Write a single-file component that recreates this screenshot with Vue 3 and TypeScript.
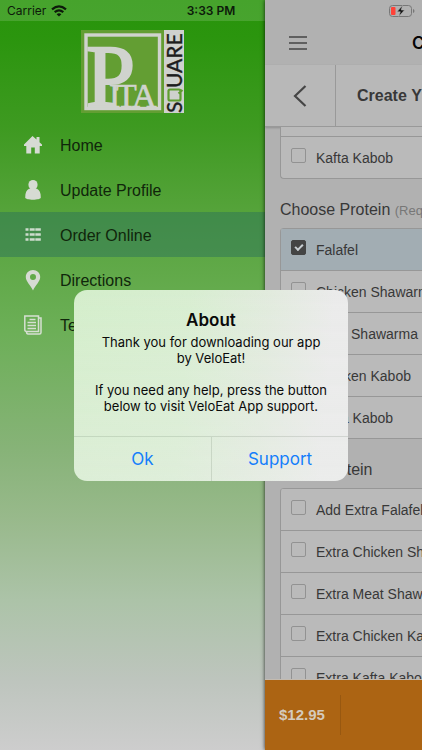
<script setup lang="ts">
import { ref } from 'vue'

interface MenuItem {
  id: string
  label: string
}
interface Option {
  id: string
  label: string
  checked: boolean
}

const menu: MenuItem[] = [
  { id: 'home', label: 'Home' },
  { id: 'profile', label: 'Update Profile' },
  { id: 'order', label: 'Order Online' },
  { id: 'directions', label: 'Directions' },
  { id: 'terms', label: 'Terms' },
]
const active = ref('order')

const firstGroup = ref<Option[]>([{ id: 'kafta', label: 'Kafta Kabob', checked: false }])
const protein = ref<Option[]>([
  { id: 'p-falafel', label: 'Falafel', checked: true },
  { id: 'p-chicken-sh', label: 'Chicken Shawarma', checked: false },
  { id: 'p-meat-sh', label: 'Meat Shawarma', checked: false },
  { id: 'p-chicken-k', label: 'Chicken Kabob', checked: false },
  { id: 'p-kafta-k', label: 'Kafta Kabob', checked: false },
])
const extra = ref<Option[]>([
  { id: 'e-falafel', label: 'Add Extra Falafel', checked: false },
  { id: 'e-chicken-sh', label: 'Extra Chicken Shawarma', checked: false },
  { id: 'e-meat-sh', label: 'Extra Meat Shawarma', checked: false },
  { id: 'e-chicken-k', label: 'Extra Chicken Kabob', checked: false },
  { id: 'e-kafta-k', label: 'Extra Kafta Kabob', checked: false },
])
const alertOpen = ref(true)
</script>

<template>
  <div class="screen">
    <aside class="drawer">
      <div class="drawer-strip"></div>
      <svg class="logo" viewBox="0 0 103 83" role="img" aria-label="Pita Square">
        <rect width="83" height="83" fill="#639e33" />
        <rect x="83" width="20" height="83" fill="#cfd1ce" />
        <rect x="5" y="5" width="73.500" height="73.500" fill="none" stroke="#d0d3ce" stroke-width="3.400" />
        <g class="logo-serif" fill="#d0d3ce" stroke="#d0d3ce">
          <text x="5" y="76" font-size="88" stroke-width="2.400">P</text>
          <text x="28 35 51" y="77" font-size="34" stroke-width="0.6">ITA</text>
        </g>
        <g class="logo-sans" fill="#1d1d1d" stroke="#1d1d1d" stroke-width="0.4" font-size="21" transform="translate(101 83) rotate(-90)">
          <text x="0" y="0">S</text>
          <text x="25" y="0">UARE</text>
        </g>
        <path d="M87.500 69V61Q87.500 59.500 89 59.500H98Q99.500 59.500 99.500 61V69Q99.500 70.500 98 70.500H89Q87.500 70.500 87.500 69ZM97.500 63.500L101.500 60" fill="none" stroke="#5f9d2f" stroke-width="2.200" />
      </svg>
      <nav class="menu">
        <a
          v-for="m in menu"
          :key="m.id"
          href="#"
          class="menu-item"
          :class="{ active: m.id === active }"
          @click.prevent="active = m.id"
        >
          <svg class="menu-icon" viewBox="0 0 20 22" aria-hidden="true">
            <path v-if="m.id === 'home'" d="M9.500 2L13.500 5.600V3H16.500V8.300L19 10.600V12H16.700V19.500H11.800V13.500H8.200V19.500H3.300V12H1V10.600Z" fill="#d6dbd3" />
            <g v-else-if="m.id === 'profile'" fill="#d6dbd3">
              <ellipse cx="10" cy="5.800" rx="4.600" ry="4.900" />
              <path d="M6 9.800H14C16.500 11 17.800 14 17.800 18.500C17.800 21.400 2.200 21.400 2.200 18.500C2.200 14 3.500 11 6 9.800Z" />
            </g>
            <path v-else-if="m.id === 'order'" d="M2.500 5.500h3M6.700 5.500h5M12.300 5.500h5.500M2.500 10.500h3M6.700 10.500h5M12.300 10.500h5.500M2.500 15.500h3M6.700 15.500h5M12.300 15.500h5.500" stroke="#cddccd" stroke-width="2.400" />
            <path v-else-if="m.id === 'directions'" fill-rule="evenodd" d="M10 1C14 1 17.200 4 17.200 8C17.200 12.500 12.500 16 10 21.500C7.500 16 2.800 12.500 2.800 8C2.800 4 6 1 10 1ZM10 5A3 3 0 1 0 10 11A3 3 0 1 0 10 5Z" fill="#d6dbd3" />
            <g v-else fill="none" stroke="#d6dfd2" stroke-width="1.500">
              <path d="M1.800 2H15.500V17.500H3.500Q1.800 17.500 1.800 15.500ZM15.500 4H18V18.500Q18 20 16.500 20H5Q3.500 20 3.500 17.500" />
              <path d="M6.500 5.500h6M4.500 8.500h8.500M4.500 11.500h8.500M4.500 14.500h8.500" />
            </g>
          </svg>
          <span>{{ m.label }}</span>
        </a>
      </nav>
    </aside>

    <main class="panel">
      <header class="topbar">
        <button class="icon-btn" type="button" aria-label="Menu">
          <svg width="20" height="16" viewBox="0 0 20 16"><path d="M1 2H19M1 8H19M1 14H19" stroke="#444" stroke-width="1.600" /></svg>
        </button>
        <h1 class="title">Create</h1>
      </header>
      <div class="subbar">
        <button class="back" type="button" aria-label="Back">
          <svg width="14" height="22" viewBox="0 0 14 22"><path d="M12.500 1L2 11L12.500 21" fill="none" stroke="#454545" stroke-width="2.200" /></svg>
        </button>
        <h2 class="subtitle">Create Your</h2>
      </div>
      <div class="content">
        <ul class="options continued">
          <li class="row-end"></li>
          <li v-for="o in firstGroup" :key="o.id" class="row">
            <label class="option" :for="o.id"><input :id="o.id" v-model="o.checked" type="checkbox" /><span>{{ o.label }}</span></label>
          </li>
        </ul>
        <h3 class="group">Choose Protein <small>(Required)</small></h3>
        <ul class="options">
          <li v-for="o in protein" :key="o.id" class="row" :class="{ selected: o.checked }">
            <label class="option" :for="o.id"><input :id="o.id" v-model="o.checked" type="checkbox" /><span>{{ o.label }}</span></label>
          </li>
        </ul>
        <h3 class="group">Extra Protein</h3>
        <ul class="options">
          <li v-for="o in extra" :key="o.id" class="row" :class="{ selected: o.checked }">
            <label class="option" :for="o.id"><input :id="o.id" v-model="o.checked" type="checkbox" /><span>{{ o.label }}</span></label>
          </li>
        </ul>
      </div>
      <footer class="cart"><strong class="price">$12.95</strong></footer>
    </main>

    <div class="status">
      <span class="carrier">
        Carrier
        <svg width="16" height="12" viewBox="0 0 16 12" aria-hidden="true">
          <g fill="none" stroke="#0d1a0a" stroke-width="2.200">
            <path d="M1 4.300Q8 -1.700 15 4.300" />
            <path d="M3.700 7.200Q8 3.500 12.300 7.200" />
          </g>
          <path d="M8 11.500L5.600 9.200Q8 7.300 10.400 9.200Z" fill="#0d1a0a" />
        </svg>
      </span>
      <time class="clock">3:33 PM</time>
      <svg class="battery" width="26" height="12" viewBox="0 0 26 12" aria-hidden="true">
        <rect x="0.500" y="0.500" width="22" height="11" rx="3" fill="none" stroke="#777" />
        <path d="M24 4Q25.500 4.500 25.500 6T24 8Z" fill="#777" />
        <rect x="2" y="2" width="4.500" height="8" rx="1" fill="#ff4238" />
        <path d="M13.500 0.500L8 6.800H11.300L9.800 11.500L15.500 5H12.200Z" fill="#111" stroke="#b1b1b1" stroke-width="0.600" />
      </svg>
    </div>

    <div v-if="alertOpen" class="overlay">
      <section class="alert" role="alertdialog" aria-labelledby="alert-title" aria-describedby="alert-text">
        <div class="alert-body">
          <h2 id="alert-title">About</h2>
          <p id="alert-text">Thank you for downloading our app<br />by VeloEat!<br /><br />If you need any help, press the button<br />below to visit VeloEat App support.</p>
        </div>
        <div class="alert-actions">
          <button type="button" @click="alertOpen = false">Ok</button>
          <button type="button">Support</button>
        </div>
      </section>
    </div>
  </div>
</template>

<style>
body {
  margin: 0;
}
</style>

<style scoped>
.screen {
  position: relative;
  display: flex;
  height: 100vh;
  overflow: hidden;
  font-family: 'Liberation Sans', Arial, sans-serif;
  color: #383838;
}
h1, h2, h3, p, ul {
  margin: 0;
  padding: 0;
}
ul {
  list-style: none;
}
button {
  border: 0;
  padding: 0;
  background: none;
  font: inherit;
  color: inherit;
}

.drawer {
  flex: 0 0 265px;
  display: flex;
  flex-direction: column;
  background: linear-gradient(#28940a 0%, #2b950e 5%, #3e9a21 17%, #55a33a 28%, #6caf57 44%, #87b378 60%, #98b98b 69%, #acc3a8 80%, #bec5be 91%, #cdcdcd 100%);
}
.drawer-strip {
  flex: none;
  height: 21px;
  background: rgba(255, 255, 255, 0.14);
}
.logo {
  flex: none;
  align-self: center;
  width: 103px;
  height: 83px;
  margin: 9px 0;
  overflow: visible;
}
.logo-serif {
  font-family: 'Liberation Serif', serif;
}
.logo-sans {
  font-family: Lato, sans-serif;
}
.menu-item {
  display: flex;
  align-items: center;
  gap: 17px;
  height: 45px;
  padding-left: 23px;
  font-size: 16px;
  color: #10260b;
  text-decoration: none;
}
.menu-item span {
  padding-top: 2px;
}
.menu-item.active {
  background: rgba(40, 110, 90, 0.45);
}
.menu-icon {
  width: 20px;
  height: 22px;
}

.panel {
  flex: 1;
  min-width: 0;
  display: flex;
  flex-direction: column;
  overflow: hidden;
  background: #b1b1b1;
  box-shadow: 0 0 4px rgba(0, 0, 0, 0.8);
  font-kerning: none;
}
.topbar {
  flex: none;
  display: flex;
  align-items: center;
  height: 44px;
  padding: 21px 0 0 23px;
  gap: 104px;
}
.icon-btn {
  display: flex;
}
.title {
  font-family: Inter, sans-serif;
  font-size: 17px;
  font-weight: 600;
  color: #050505;
}
.subbar {
  flex: none;
  display: flex;
  align-items: stretch;
  height: 61px;
  background: #b8b8b8;
  border-bottom: 1px solid #999;
  box-shadow: 0 1px 2px rgba(0, 0, 0, 0.2);
}
.back {
  flex: none;
  display: flex;
  align-items: center;
  justify-content: center;
  width: 71px;
  border-right: 1px solid #999;
}
.subtitle {
  align-self: center;
  padding-left: 21px;
  font-size: 16px;
  white-space: nowrap;
}
.content {
  flex: 1;
  min-height: 0;
  overflow: hidden;
  padding-left: 15px;
}
.options {
  border: 1px solid #979797;
  border-top: 0;
  border-right: 0;
  border-radius: 4px 0 0 4px;
  background: #bababa;
  overflow: hidden;
}
.options.continued {
  border-top-left-radius: 0;
}
.row-end {
  height: 9px;
}
.row {
  border-top: 1px solid #979797;
}
.row.selected {
  background: #a2adb3;
}
.option {
  display: flex;
  align-items: center;
  gap: 10px;
  height: 41px;
  padding-left: 10px;
  font-size: 14px;
  white-space: nowrap;
}
.option input {
  appearance: none;
  flex: none;
  display: grid;
  place-items: center;
  width: 15px;
  height: 15px;
  margin: 0 0 4px;
  border: 1px solid #929292;
  border-radius: 2px;
}
.option input:checked {
  background: #444;
  border-color: #444;
}
.option input:checked::before {
  content: '';
  width: 6px;
  height: 3px;
  margin-bottom: 2px;
  border: solid #c8ced2;
  border-width: 0 0 2px 2px;
  transform: rotate(-45deg);
}
.group {
  padding-top: 12px;
  font-size: 16px;
  font-weight: 400;
  line-height: 37px;
  white-space: nowrap;
}
.group small {
  font-size: 13px;
  line-height: 16px;
  color: #777;
}
.cart {
  flex: none;
  display: flex;
  align-items: center;
  height: 70px;
  padding-left: 14px;
  border-top: 1px solid #c4bbb0;
  background: #ac6413;
}
.price {
  padding-right: 15px;
  border-right: 1px solid #985810;
  font-size: 15px;
  line-height: 40px;
  color: #d4cabd;
}

.status {
  position: absolute;
  inset: 0 0 auto 0;
  display: grid;
  grid-template-columns: 1fr auto 1fr;
  align-items: center;
  height: 21px;
  padding: 0 7px;
  font: 12px Inter, sans-serif;
  color: #0d1a0a;
}
.carrier {
  display: flex;
  align-items: center;
  gap: 5px;
}
.clock {
  font-weight: 600;
}
.battery {
  justify-self: end;
}

.overlay {
  position: absolute;
  inset: 21px 0 0 0;
  display: flex;
  align-items: center;
  justify-content: center;
}
.alert {
  width: 65%;
  min-width: 274px;
  border-radius: 13px;
  overflow: hidden;
  background:
    linear-gradient(rgba(235, 238, 235, 0) 0%, rgba(235, 238, 235, 0.35) 100%),
    linear-gradient(95deg, #d4eecb 0%, #d8eed1 40%, #e2ebde 68%, #ebebeb 90%);
  font-family: Inter, sans-serif;
  color: #0a0a0a;
  text-align: center;
}
.alert-body {
  padding: 19px 16px 22px;
}
.alert h2 {
  font-size: 17px;
  font-weight: 600;
  line-height: 22px;
}
.alert p {
  padding-top: 3px;
  font-size: 13px;
  line-height: 16px;
}
.alert-actions {
  display: grid;
  grid-template-columns: 1fr 1fr;
  border-top: 1px solid rgba(60, 80, 60, 0.14);
}
.alert-actions button {
  height: 44px;
  font-size: 17px;
  color: #147efb;
}
.alert-actions button + button {
  border-left: 1px solid rgba(60, 80, 60, 0.14);
}
</style>
